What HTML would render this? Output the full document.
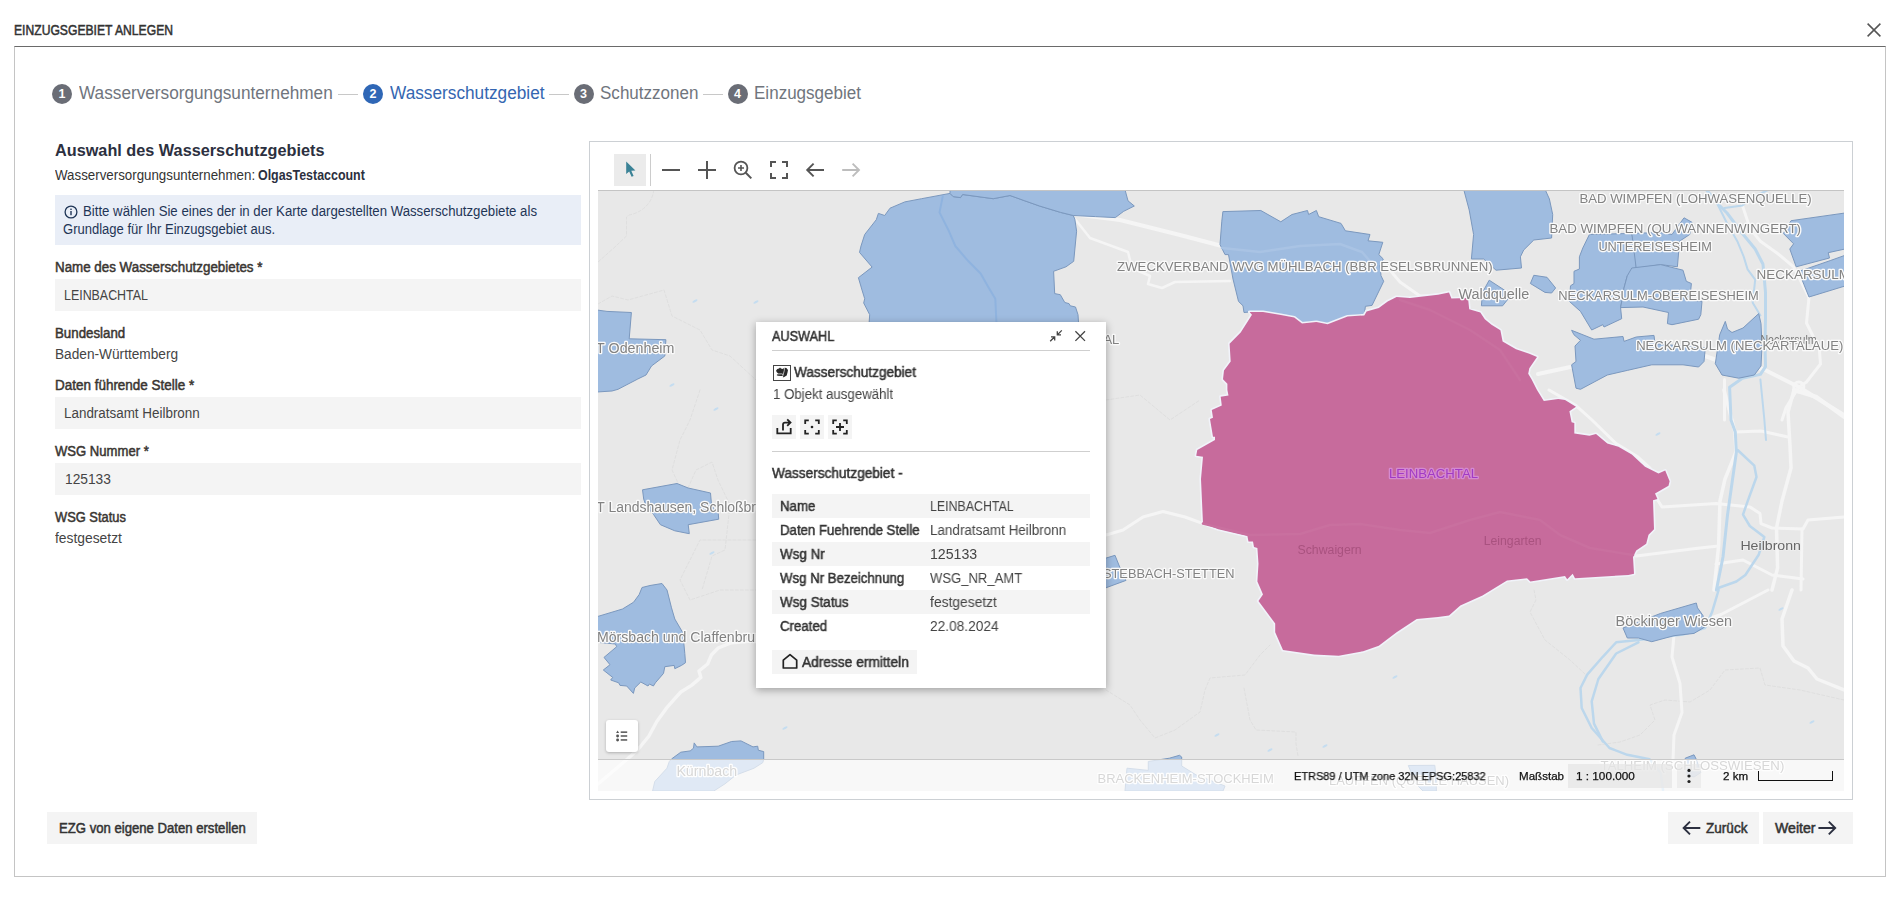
<!DOCTYPE html>
<html lang="de"><head><meta charset="utf-8"><title>Einzugsgebiet anlegen</title>
<style>
html,body{margin:0;padding:0;background:#fff;}
body{width:1899px;height:898px;position:relative;overflow:hidden;font-family:"Liberation Sans",sans-serif;color:#333;}
.t{position:absolute;white-space:nowrap;line-height:1;transform-origin:0 50%;display:block;}
.b{position:absolute;box-sizing:border-box;}
svg{position:absolute;overflow:visible;}
</style></head><body>
<div class="b" style="left:14px;top:46px;width:1872px;height:831px;border:1px solid #c4c4c4;border-top:1px solid #6a6a6a;"></div>
<span class="t" style="left:13.90px;top:23.05px;font-size:14.00px;color:#333;transform:scaleX(0.8673);-webkit-text-stroke:0.5px #333;">EINZUGSGEBIET ANLEGEN</span>
<svg style="left:1867px;top:23px" width="14" height="14" viewBox="0 0 14 14"><path d="M0.6 0.6 L13.4 13.4 M13.4 0.6 L0.6 13.4" stroke="#555" stroke-width="1.5" fill="none"/></svg>
<div class="b" style="left:52px;top:84px;width:20px;height:20px;border-radius:50%;background:#6a6d76;"></div>
<span class="t" style="left:52px;top:88.2px;width:20px;text-align:center;font-size:12.5px;font-weight:bold;color:#fff;">1</span>
<span class="t" style="left:78.80px;top:85.19px;font-size:17.50px;color:#70757d;transform:scaleX(0.9832);">Wasserversorgungsunternehmen</span>
<div class="b" style="left:363px;top:84px;width:20px;height:20px;border-radius:50%;background:#2f67b6;"></div>
<span class="t" style="left:363px;top:88.2px;width:20px;text-align:center;font-size:12.5px;font-weight:bold;color:#fff;">2</span>
<span class="t" style="left:389.50px;top:85.19px;font-size:17.50px;color:#3466b1;transform:scaleX(0.9848);">Wasserschutzgebiet</span>
<div class="b" style="left:573.5px;top:84px;width:20px;height:20px;border-radius:50%;background:#6a6d76;"></div>
<span class="t" style="left:573.5px;top:88.2px;width:20px;text-align:center;font-size:12.5px;font-weight:bold;color:#fff;">3</span>
<span class="t" style="left:599.50px;top:85.19px;font-size:17.50px;color:#70757d;transform:scaleX(0.9738);">Schutzzonen</span>
<div class="b" style="left:727.5px;top:84px;width:20px;height:20px;border-radius:50%;background:#6a6d76;"></div>
<span class="t" style="left:727.5px;top:88.2px;width:20px;text-align:center;font-size:12.5px;font-weight:bold;color:#fff;">4</span>
<span class="t" style="left:754.00px;top:85.19px;font-size:17.50px;color:#70757d;transform:scaleX(0.9736);">Einzugsgebiet</span>
<div class="b" style="left:338px;top:93.5px;width:19.5px;height:1px;background:#c8c8c8;"></div>
<div class="b" style="left:549px;top:93.5px;width:20px;height:1px;background:#c8c8c8;"></div>
<div class="b" style="left:702.5px;top:93.5px;width:20px;height:1px;background:#c8c8c8;"></div>
<span class="t" style="left:55.10px;top:142.86px;font-size:16.70px;font-weight:bold;color:#2c3040;transform:scaleX(0.9740);">Auswahl des Wasserschutzgebiets</span>
<span class="t" style="left:54.90px;top:167.95px;font-size:14.00px;color:#333;transform:scaleX(0.9513);">Wasserversorgungsunternehmen:</span>
<span class="t" style="left:258.00px;top:167.95px;font-size:14.00px;font-weight:bold;color:#2c3040;transform:scaleX(0.8876);">OlgasTestaccount</span>
<div class="b" style="left:55px;top:195px;width:526px;height:50px;background:#e9eef7;"></div>
<svg style="left:64px;top:204.5px" width="14" height="14" viewBox="0 0 14 14"><circle cx="7" cy="7" r="5.9" fill="none" stroke="#1f3556" stroke-width="1.3"/><rect x="6.3" y="6" width="1.4" height="4.2" fill="#1f3556"/><rect x="6.3" y="3.6" width="1.4" height="1.4" fill="#1f3556"/></svg>
<span class="t" style="left:83.00px;top:203.95px;font-size:14.00px;color:#1f3556;transform:scaleX(0.9435);">Bitte wählen Sie eines der in der Karte dargestellten Wasserschutzgebiete als</span>
<span class="t" style="left:62.90px;top:222.15px;font-size:14.00px;color:#1f3556;transform:scaleX(0.9300);">Grundlage für Ihr Einzugsgebiet aus.</span>
<span class="t" style="left:55.00px;top:260.15px;font-size:14.00px;color:#3a3632;transform:scaleX(0.9542);-webkit-text-stroke:0.5px #3a3632;">Name des Wasserschutzgebietes *</span>
<div class="b" style="left:55px;top:279px;width:526px;height:32px;background:#f4f4f4;"></div>
<span class="t" style="left:63.70px;top:288.15px;font-size:14.00px;color:#444;transform:scaleX(0.8865);">LEINBACHTAL</span>
<span class="t" style="left:55.40px;top:326.15px;font-size:14.00px;color:#3a3632;transform:scaleX(0.9497);-webkit-text-stroke:0.5px #3a3632;">Bundesland</span>
<span class="t" style="left:55.40px;top:347.15px;font-size:14.00px;color:#444;transform:scaleX(0.9764);">Baden-Württemberg</span>
<span class="t" style="left:55.20px;top:378.15px;font-size:14.00px;color:#3a3632;transform:scaleX(0.9616);-webkit-text-stroke:0.5px #3a3632;">Daten führende Stelle *</span>
<div class="b" style="left:55px;top:397px;width:526px;height:32px;background:#f4f4f4;"></div>
<span class="t" style="left:64.00px;top:406.15px;font-size:14.00px;color:#444;transform:scaleX(0.9583);">Landratsamt Heilbronn</span>
<span class="t" style="left:55.20px;top:444.15px;font-size:14.00px;color:#3a3632;transform:scaleX(0.9341);-webkit-text-stroke:0.5px #3a3632;">WSG Nummer *</span>
<div class="b" style="left:55px;top:463px;width:526px;height:32px;background:#f4f4f4;"></div>
<span class="t" style="left:64.90px;top:472.15px;font-size:14.00px;color:#444;transform:scaleX(0.9831);">125133</span>
<span class="t" style="left:55.20px;top:510.15px;font-size:14.00px;color:#3a3632;transform:scaleX(0.9195);-webkit-text-stroke:0.5px #3a3632;">WSG Status</span>
<span class="t" style="left:55.20px;top:531.15px;font-size:14.00px;color:#444;transform:scaleX(0.9883);">festgesetzt</span>
<div class="b" style="left:47px;top:812px;width:210px;height:32px;background:#f4f4f4;"></div>
<span class="t" style="left:58.80px;top:821.05px;font-size:14.00px;color:#333;transform:scaleX(0.9377);-webkit-text-stroke:0.5px #333;">EZG von eigene Daten erstellen</span>
<div class="b" style="left:1668px;top:812px;width:90.5px;height:32px;background:#f4f4f4;"></div>
<div class="b" style="left:1763px;top:812px;width:89.5px;height:32px;background:#f4f4f4;"></div>
<svg style="left:1682px;top:820px" width="20" height="16" viewBox="0 0 20 16"><path d="M18.3 8 H1.6 M8 1.6 L1.6 8 L8 14.4" stroke="#2c3040" stroke-width="1.9" fill="none"/></svg>
<span class="t" style="left:1705.80px;top:821.35px;font-size:14.00px;color:#333;transform:scaleX(0.9687);-webkit-text-stroke:0.5px #333;">Zurück</span>
<span class="t" style="left:1774.70px;top:821.35px;font-size:14.00px;color:#333;transform:scaleX(1.0080);-webkit-text-stroke:0.5px #333;">Weiter</span>
<svg style="left:1816.7px;top:820px" width="20" height="16" viewBox="0 0 20 16"><path d="M1.4 8 H18.2 M11.8 1.6 L18.2 8 L11.8 14.4" stroke="#2c3040" stroke-width="1.9" fill="none"/></svg>
<div class="b" style="left:589px;top:141px;width:1264px;height:659px;border:1px solid #ccd0d4;background:#fff;"></div>
<div class="b" style="left:614px;top:154px;width:32px;height:32px;background:#ebebeb;"></div>
<div class="b" style="left:650px;top:154px;width:1px;height:32px;background:#ccc;"></div>
<svg style="left:589px;top:141px" width="300" height="50" viewBox="589 141 300 50"><path d="M626.2 161.4 L626.2 174 L629.2 171.4 L631.6 176.8 L633.6 175.9 L631.3 170.7 L635.4 170.5 Z" fill="#3a8296"/><path d="M662 170 H680 M698 170 H716 M707 161 V179" stroke="#555" stroke-width="2" fill="none"/><circle cx="741" cy="168" r="6.4" stroke="#555" stroke-width="1.8" fill="none"/><path d="M745.8 172.8 L751.3 178.4" stroke="#555" stroke-width="2" fill="none"/><path d="M738 168 H744 M741 165 V171" stroke="#555" stroke-width="1.6" fill="none"/><path d="M771 167 V162 H776 M782 162 H787 V167 M787 173 V178 H782 M776 178 H771 V173" stroke="#555" stroke-width="2" fill="none"/><path d="M824 170 H807.4 M813.6 163.6 L807.2 170 L813.6 176.4" stroke="#555" stroke-width="1.9" fill="none"/><path d="M842.2 170 H858.8 M852.6 163.6 L859 170 L852.6 176.4" stroke="#bdbdbd" stroke-width="1.9" fill="none"/></svg>
<svg style="left:598px;top:190px;overflow:hidden;will-change:transform" width="1246" height="601" viewBox="598 190 1246 601"><rect x="598" y="190" width="1246" height="601" fill="#e8e8e8"/><path d="M653.7,190 C653,200 645,212 629,215 L626.5,217 L626.5,236 L616,246 L598,262" fill="none" stroke="#dcdcdc" stroke-width="0.8" stroke-linecap="round" stroke-linejoin="round" stroke-dasharray="3 2"/><path d="M598,304 L612,296 L628,300 L664,290 L672,316 L700,330 L712,350 L730,356 L756,380" fill="none" stroke="#dcdcdc" stroke-width="0.8" stroke-linecap="round" stroke-linejoin="round" stroke-dasharray="3 2"/><path d="M756,540 L700,540 L690,560 L680,580 L690,600 L720,590 L756,590" fill="none" stroke="#dcdcdc" stroke-width="0.8" stroke-linecap="round" stroke-linejoin="round" stroke-dasharray="3 2"/><path d="M700,390 L690,420 L680,440 L672,470 L678,483" fill="none" stroke="#dcdcdc" stroke-width="0.8" stroke-linecap="round" stroke-linejoin="round" stroke-dasharray="3 2"/><path d="M688,488 L696,470 L712,462 L718,480 L730,505 L725,550 L712,556 L702,590" fill="none" stroke="#dcdcdc" stroke-width="0.8" stroke-linecap="round" stroke-linejoin="round" stroke-dasharray="3 2"/><path d="M1244,688 L1250,720 L1256,730 L1296,732 L1296,744 L1298,756" fill="none" stroke="#dcdcdc" stroke-width="0.8" stroke-linecap="round" stroke-linejoin="round" stroke-dasharray="3 2"/><path d="M1106,400 L1140,395 L1170,420 L1200,400" fill="none" stroke="#dcdcdc" stroke-width="0.8" stroke-linecap="round" stroke-linejoin="round" stroke-dasharray="3 2"/><path d="M1106,690 L1130,705 L1140,720 L1155,738 L1175,730 L1200,712 L1205,690 L1210,678 L1245,675 L1260,655 L1270,645" fill="none" stroke="#dcdcdc" stroke-width="0.8" stroke-linecap="round" stroke-linejoin="round" stroke-dasharray="3 2"/><path d="M1534,590 L1536,600 L1530,612 L1545,640 L1570,660 L1585,674" fill="none" stroke="#dcdcdc" stroke-width="0.8" stroke-linecap="round" stroke-linejoin="round" stroke-dasharray="3 2"/><path d="M1598,745 L1620,742 L1640,735 L1655,720 L1650,705 L1665,700 L1690,702 L1710,690 L1725,670 L1760,668 L1765,685 L1800,690 L1844,700" fill="none" stroke="#dcdcdc" stroke-width="0.8" stroke-linecap="round" stroke-linejoin="round" stroke-dasharray="3 2"/><path d="M598,784 L627.4,759 L638,749.5 L648.8,736.2 L656.8,721.5 L667.5,706.8 L680.8,692 L691.5,685.4 L700.9,677.4 L699,671 L707.6,664 L711.6,654.7 L718.2,648 L731.6,642.7 L756,640.5" fill="none" stroke="#f5f5f5" stroke-width="3.4" stroke-linecap="round" stroke-linejoin="round" /><path d="M1106,535 L1123,530 L1143,517 L1163,511.5 L1185,517 L1203,523.6" fill="none" stroke="#f5f5f5" stroke-width="3" stroke-linecap="round" stroke-linejoin="round" /><path d="M1064,213 L1120,220 L1180,235 L1222,246" fill="none" stroke="#f5f5f5" stroke-width="4" stroke-linecap="round" stroke-linejoin="round" /><path d="M1075,219 L1090,238 L1128,252 L1132,268 L1150,276 L1148,284 L1162,288 L1175,282 L1230,281" fill="none" stroke="#f5f5f5" stroke-width="2.5" stroke-linecap="round" stroke-linejoin="round" /><path d="M1383,262 L1400,282 L1420,296 L1438,296" fill="none" stroke="#f5f5f5" stroke-width="3" stroke-linecap="round" stroke-linejoin="round" /><path d="M1538,374 L1575,366" fill="none" stroke="#f5f5f5" stroke-width="4" stroke-linecap="round" stroke-linejoin="round" /><path d="M1742.4,205.4 L1750,228.4 L1760.4,241.2 L1778.3,254 L1793.6,266.8 L1809,297.5 L1806.5,323 L1819.3,348.8 L1820.5,364 L1806.5,382 L1798.8,387" fill="none" stroke="#f5f5f5" stroke-width="3" stroke-linecap="round" stroke-linejoin="round" /><path d="M1705,356 L1722,362 L1763,369 L1798.8,387 L1844,415" fill="none" stroke="#f5f5f5" stroke-width="4" stroke-linecap="round" stroke-linejoin="round" /><path d="M1798.8,387 L1786,407.7 L1782,420" fill="none" stroke="#f5f5f5" stroke-width="3" stroke-linecap="round" stroke-linejoin="round" /><path d="M1724.5,379.5 L1724.5,420" fill="none" stroke="#f5f5f5" stroke-width="3" stroke-linecap="round" stroke-linejoin="round" /><path d="M1798.8,387 m-5,0 a5,5 0 1,0 10,0 a5,5 0 1,0 -10,0" fill="none" stroke="#f5f5f5" stroke-width="3" stroke-linecap="round" stroke-linejoin="round" /><path d="M1549,390 L1576,405.6 L1592,420 L1616,443.5 L1638,457 L1650,468" fill="none" stroke="#f5f5f5" stroke-width="3" stroke-linecap="round" stroke-linejoin="round" /><path d="M1724,390 L1735,432 L1736,452 L1725,479 L1720,501 L1718.6,546 L1714,590" fill="none" stroke="#f5f5f5" stroke-width="3.5" stroke-linecap="round" stroke-linejoin="round" /><path d="M1657,499 L1662,507 L1716,503.6 L1750,507 L1760,513.6 L1761,523.6 L1772,528 L1803,529 L1808,520 L1844,517" fill="none" stroke="#f5f5f5" stroke-width="3" stroke-linecap="round" stroke-linejoin="round" /><path d="M1636,556 L1700,548 L1718.6,546" fill="none" stroke="#f5f5f5" stroke-width="3" stroke-linecap="round" stroke-linejoin="round" /><path d="M1794,390 L1788,412 L1790,446 L1791,468 L1782,501 L1776.5,528 L1777.6,568 L1772,590" fill="none" stroke="#f5f5f5" stroke-width="3.5" stroke-linecap="round" stroke-linejoin="round" /><path d="M1735,432 L1761,431 L1788,437" fill="none" stroke="#f5f5f5" stroke-width="3" stroke-linecap="round" stroke-linejoin="round" /><path d="M1794,390 L1816.6,397 L1844,417" fill="none" stroke="#f5f5f5" stroke-width="4" stroke-linecap="round" stroke-linejoin="round" /><path d="M1716,564 L1743,560 L1772,575 L1803,579" fill="none" stroke="#f5f5f5" stroke-width="3" stroke-linecap="round" stroke-linejoin="round" /><path d="M1802,529 L1801,590" fill="none" stroke="#f5f5f5" stroke-width="3" stroke-linecap="round" stroke-linejoin="round" /><path d="M1674,634.5 L1672,657 L1680,683.5 L1682,712.5 L1674,735 L1673,760" fill="none" stroke="#f5f5f5" stroke-width="3" stroke-linecap="round" stroke-linejoin="round" /><path d="M1792,590 L1782,619 L1783,646 L1794,661 L1808,668 L1817,679 L1844,690" fill="none" stroke="#f5f5f5" stroke-width="3.5" stroke-linecap="round" stroke-linejoin="round" /><path d="M1768,590 L1721,614.5 L1705,620" fill="none" stroke="#f5f5f5" stroke-width="3" stroke-linecap="round" stroke-linejoin="round" /><path d="M1706.6,190 L1716.8,202.8 L1727,213 L1742.4,233.5 L1755.2,249 L1763,264.3 L1765.5,292.4 L1765.5,318 L1765,343.6 L1765.5,366.7 L1760.4,374.4 L1742.4,378.2 L1729.6,387.2 L1731,420 L1735.3,432 L1736.4,452 L1727.5,515 L1723,557 L1716.4,590" fill="none" stroke="#bcd7ec" stroke-width="3" stroke-linecap="round" stroke-linejoin="round" /><path d="M1714.3,197.7 L1727,223.3 L1737.3,241.2 L1743.7,256.6 L1747.6,269.4 L1755.2,279.6 L1752.7,302.7 L1760.4,315.5" fill="none" stroke="#bcd7ec" stroke-width="2" stroke-linecap="round" stroke-linejoin="round" /><path d="M1724.5,208 L1742.4,205.4 L1755,196 L1768,190" fill="none" stroke="#bcd7ec" stroke-width="2" stroke-linecap="round" stroke-linejoin="round" /><path d="M1760.4,379.5 L1764.2,418 L1766,440" fill="none" stroke="#bcd7ec" stroke-width="2" stroke-linecap="round" stroke-linejoin="round" /><path d="M1737.6,450 L1754.3,465.7 L1756.5,477 L1747.6,501.4 L1743,514.7 L1749.8,526 L1764.3,537 L1758.7,554.8 L1745.4,575 L1736.4,581.5 L1717.5,588.2" fill="none" stroke="#bcd7ec" stroke-width="2.5" stroke-linecap="round" stroke-linejoin="round" /><path d="M1718.6,590 L1712,612.3 L1705,628 L1683,634.5 L1638.4,640 L1616.2,642.3 L1602.8,656.8 L1587.2,674.6 L1580.5,688 L1581.7,708 L1591.7,728 L1609.5,748 L1627.3,754.8 L1649.6,759.3 L1660.7,772.6 L1663,790" fill="none" stroke="#bcd7ec" stroke-width="2.5" stroke-linecap="round" stroke-linejoin="round" /><path d="M1638.4,642.3 L1616.2,653.5 L1598.4,679 L1591.7,701.4 L1594,723.6 L1602.8,741.4" fill="none" stroke="#bcd7ec" stroke-width="2.5" stroke-linecap="round" stroke-linejoin="round" /><ellipse cx="756" cy="302" rx="2.8" ry="1.2" fill="#c5ddf0" transform="rotate(-25 756 302)"/><ellipse cx="695" cy="301" rx="2.8" ry="1.2" fill="#c5ddf0" transform="rotate(-25 695 301)"/><ellipse cx="672" cy="385" rx="2.8" ry="1.2" fill="#c5ddf0" transform="rotate(-25 672 385)"/><ellipse cx="716" cy="409" rx="2.8" ry="1.2" fill="#c5ddf0" transform="rotate(-25 716 409)"/><ellipse cx="712" cy="553" rx="2.8" ry="1.2" fill="#c5ddf0" transform="rotate(-25 712 553)"/><ellipse cx="1000" cy="320" rx="2.8" ry="1.2" fill="#c5ddf0" transform="rotate(-25 1000 320)"/><ellipse cx="785" cy="728" rx="2.8" ry="1.2" fill="#c5ddf0" transform="rotate(-25 785 728)"/><ellipse cx="1217" cy="735" rx="2.8" ry="1.2" fill="#c5ddf0" transform="rotate(-25 1217 735)"/><ellipse cx="1325" cy="746" rx="2.8" ry="1.2" fill="#c5ddf0" transform="rotate(-25 1325 746)"/><ellipse cx="1270" cy="750" rx="2.8" ry="1.2" fill="#c5ddf0" transform="rotate(-25 1270 750)"/><ellipse cx="1395" cy="677" rx="2.8" ry="1.2" fill="#c5ddf0" transform="rotate(-25 1395 677)"/><ellipse cx="1456" cy="604" rx="2.8" ry="1.2" fill="#c5ddf0" transform="rotate(-25 1456 604)"/><ellipse cx="1812" cy="722" rx="2.8" ry="1.2" fill="#c5ddf0" transform="rotate(-25 1812 722)"/><ellipse cx="1781" cy="609" rx="2.8" ry="1.2" fill="#c5ddf0" transform="rotate(-25 1781 609)"/><ellipse cx="1658" cy="434" rx="2.8" ry="1.2" fill="#c5ddf0" transform="rotate(-25 1658 434)"/><polygon points="950,193.4 921.6,198.7 904.8,201.9 890,208.2 884.7,215.5 878.4,213.4 876.3,219.7 864.7,234.5 861,246 859.5,252.4 872.1,267.1 858.4,277.7 862,290 864.7,298.7 863.7,303 869.7,314.7 868.6,330 1079,330 1078,314.7 1075.5,307 1070.3,305.8 1069,303.6 1064.8,302.5 1060.3,294.7 1054.7,293.6 1053.6,271.3 1066,266.8 1073.7,261.3 1076.6,231.2 1074.8,219 1073.2,215.5 1060.6,212.4 1039.5,206 1024.8,200.8 1010,195.5 993.2,198.7 962.6,194.5 960.5,197.6 953.2,196.6" fill="#9fbce0" stroke="#7b98be" stroke-width="1" stroke-linejoin="round" /><polygon points="950,189 950,193.4 953.2,196.6 960.5,197.6 962.6,194.5 993.2,198.7 1010,195.5 1024.8,200.8 1039.5,206 1060.6,212.4 1073.2,215.5 1095.3,216.6 1115.3,217.6 1123.7,211.3 1134.3,206 1128,200.8 1124.8,189" fill="#9fbce0" stroke="#7b98be" stroke-width="1" stroke-linejoin="round" /><polygon points="597,310 607,311.4 631.4,312.5 629.2,338.8 665.9,339.7 664.8,356 651.5,366 646,375 637.8,379 618,389.3 612,391 597,392" fill="#9fbce0" stroke="#7b98be" stroke-width="1" stroke-linejoin="round" /><polygon points="1222.9,211.6 1260.8,210.5 1280.8,221.8 1292,214.5 1307.5,210.5 1308.6,214.5 1316.4,210.5 1318.7,216.7 1341,223.4 1345.4,230.8 1370,234.5 1368,240.8 1382.8,242.3 1378.8,254.6 1383.3,259 1380,265.7 1381,275.7 1383.7,281.3 1372,305.4 1365.4,306.3 1364.3,314.7 1347.6,315.8 1327.6,323.6 1316.4,321.4 1302,323 1294.2,317 1280.8,314.7 1263,312 1249.6,312 1244,312.5 1243,305.8 1238.5,301.4 1233,279 1228.5,254.6 1225,254.6 1220,244.6 1221.8,221.2" fill="#9fbce0" stroke="#7b98be" stroke-width="1" stroke-linejoin="round" /><polygon points="1463.6,189 1544.9,189 1549.4,199 1552.7,214.5 1551.6,238 1533.8,240 1523.7,250 1520.4,256.8 1521.5,268 1496,270.2 1483.7,259 1471.4,259 1473.6,234.5 1469.2,210" fill="#9fbce0" stroke="#7b98be" stroke-width="1" stroke-linejoin="round" /><polygon points="1489.2,280.2 1511.5,294.7 1502.6,305.8 1481.4,305.8 1482.5,292.4" fill="#9fbce0" stroke="#7b98be" stroke-width="1" stroke-linejoin="round" /><polygon points="1533.8,275.3 1547,277.3 1555.6,288 1551.6,293 1545,292.4 1530.4,283.5" fill="#9fbce0" stroke="#7b98be" stroke-width="1" stroke-linejoin="round" /><polygon points="1589.4,234.5 1631.8,233.4 1636.2,254.6 1636.2,268 1627.3,275.7 1624,288 1620.6,308 1621.7,318.7 1604,327 1602.8,324.7 1591.7,330 1580.5,311.4 1569.4,301.4 1570.5,285.8 1574,283.5 1574,271.3 1579.4,269 1579.4,256.8 1582.8,248" fill="#9fbce0" stroke="#7b98be" stroke-width="1" stroke-linejoin="round" /><polygon points="1631.8,233.4 1660,232.5 1672,234.5 1684,217.8 1692,222.3 1689.7,234.5 1679.6,241.2 1677.4,266.8 1660.7,264.6 1636.2,268.4" fill="#9fbce0" stroke="#7b98be" stroke-width="1" stroke-linejoin="round" /><polygon points="1631.8,268 1660.7,264.6 1683,270.2 1686.3,281.3 1691.4,283.5 1689.7,300.2 1702,301.4 1700.8,314.7 1698.6,319.2 1672,324.7 1667.4,323.6 1668.5,312.5 1643,307 1620.6,307.6 1624,288 1627.3,275.7" fill="#9fbce0" stroke="#7b98be" stroke-width="1" stroke-linejoin="round" /><polygon points="1571.6,330.3 1594,339.2 1623,336.5 1624,341.4 1636.2,337 1654,335.4 1655,343.7 1705.3,348 1704,361.5 1698.6,367 1683,364.8 1651.8,364.8 1627.3,370.4 1607.3,375 1580.5,389.3 1576,388.2 1571.6,364.8 1576,361.5 1575,346 1580.5,340.3 1574,334.8" fill="#9fbce0" stroke="#7b98be" stroke-width="1" stroke-linejoin="round" /><polygon points="1725.3,321.4 1727.5,329.2 1732,332.5 1743,328 1758.7,313.6 1761,323.6 1762,346 1761,366 1754.3,375 1738.7,378.2 1722,375 1715.3,363.7 1719.7,334.8" fill="#9fbce0" stroke="#7b98be" stroke-width="1" stroke-linejoin="round" /><polygon points="1791,220.7 1845,213 1845,249 1828.2,252.7 1829.5,258 1796.2,266.8 1789.8,249 1793.6,243.8 1783.4,233.5" fill="#9fbce0" stroke="#7b98be" stroke-width="1" stroke-linejoin="round" /><polygon points="1830.8,260.4 1845,255.3 1845,286 1809,297 1804,284.7 1798.8,271.5" fill="#9fbce0" stroke="#7b98be" stroke-width="1" stroke-linejoin="round" /><polygon points="642.5,489.8 677,483.5 688.2,488 710.5,493 711.6,505.8 718.3,513.6 718.7,519.2 688.2,524.7 689.3,533.7 674.8,530.8 660.4,524.7 653.7,514.7 646,505.8 643.7,499" fill="#9fbce0" stroke="#7b98be" stroke-width="1" stroke-linejoin="round" /><polygon points="642,587.5 650,585.5 662,583.5 667,590 671.5,607.8 674.8,619 682.6,632.3 683.5,640 684.8,653.4 685.5,662.7 681.5,665.4 674.8,668.7 674.2,665.4 664.8,666.7 663.5,673.4 655.4,682.8 653.4,686 649.4,684 648,686 640.8,682 634.7,688 633.4,693.4 626.7,686 620,685.4 618.7,682.8 610.7,680 612.7,677.4 603.3,670 610,664.7 604,657.4 616.7,646.7 615.4,644 597,642.3 597,616.7 622.5,609 633.6,602.2 639.2,594.5" fill="#9fbce0" stroke="#7b98be" stroke-width="1" stroke-linejoin="round" /><polygon points="671.5,759 680.8,752.2 690.2,750.9 693.5,748.2 694.2,742.9 696.9,746.9 718.2,746.2 731.6,741.5 741,740.9 753,746.9 757.7,746.2 758.3,750.2 763.7,751.6 763.7,759 762.8,762.6 754,768.2 736,775 725,783.8 713.8,791 652.6,791 654.8,781.5 667,768.2 669.3,761.5" fill="#9fbce0" stroke="#7b98be" stroke-width="1" stroke-linejoin="round" /><polygon points="1100,560 1115,555.3 1119.3,566 1126,580.4 1100,590" fill="#9fbce0" stroke="#7b98be" stroke-width="1" stroke-linejoin="round" /><polygon points="1148.3,761.5 1169.4,758.2 1179.5,755.3 1181.7,757 1181.7,766 1196.2,775 1225,786 1223,791 1125,791 1127,768.2 1148.3,770.4" fill="#9fbce0" stroke="#7b98be" stroke-width="1" stroke-linejoin="round" /><polygon points="1623,628 1660.7,613.4 1696.3,603 1697.5,607.8 1703,615.6 1705.3,626.7 1694,633.4 1674,635.7 1651.8,641.7 1638.4,638 1627.3,638" fill="#9fbce0" stroke="#7b98be" stroke-width="1" stroke-linejoin="round" /><polygon points="1685.2,758.2 1694,754.8 1696.3,759.3 1700.8,772.6 1694,777 1687.4,775" fill="#9fbce0" stroke="#7b98be" stroke-width="1" stroke-linejoin="round" /><polygon points="1408.3,765.5 1434.8,765.3 1436,778 1436.4,791 1423,791 1414,782 1411,772" fill="#9fbce0" stroke="#7b98be" stroke-width="1" stroke-linejoin="round" /><path d="M942.7,196.6 L939.5,212.4 L949,231.3 L955.3,246 L968,260.8 L980.6,273.5 L989,288.2 L995.3,298.7 L996.4,322" fill="none" stroke="#8fb3df" stroke-width="2" stroke-linecap="round" stroke-linejoin="round" /><path d="M1222,248 L1260,252 L1300,246 L1340,244 L1362,252 L1376,268" fill="none" stroke="#a9c3e4" stroke-width="2.5" stroke-linecap="round" stroke-linejoin="round" /><polygon points="1249.6,312 1263,312 1280.8,315 1294.2,317.5 1302,323.6 1316.4,322 1327.6,324.3 1347.6,316.5 1364.3,315.4 1366.6,311.4 1378.8,308 1387.7,301.4 1396.6,297 1410,298 1438,294.7 1449,292.4 1451.4,298.5 1468,298 1469.2,309.2 1480.3,312.5 1484.8,319.2 1491.5,324.7 1500.4,330.3 1502.6,341.4 1516,349.2 1529.3,353.7 1537,357 1529.3,368.2 1528.2,373.7 1531.5,379.3 1537,390 1543.8,401 1558.3,399 1565,400 1576,406.7 1569.4,411.2 1571.6,422.3 1574.3,423 1574.3,433.4 1589.4,435.7 1596,434 1607.3,443.5 1618.4,446.8 1631.8,454.6 1645,466.8 1658.5,473.5 1665.2,470.6 1669.6,481.3 1668.5,485.8 1655,493.6 1657.4,499 1653,500.2 1654,529.2 1648.5,534.8 1646.2,543.7 1636.2,550.4 1633,557 1634,573.7 1628.4,575 1575,578.2 1572.7,573.7 1567.2,579.3 1565,576 1530.4,581.5 1527,578.2 1507,580.4 1491.5,590 1482.5,595.6 1460.3,605.6 1449,615.6 1438,617 1416.7,619 1396.6,632.3 1378.8,645.7 1363.2,651.2 1338.7,655.7 1314.2,654.6 1283,650 1275.2,632.3 1275.2,623.4 1258.5,601 1263,594.5 1261,589.8 1257.4,581.5 1258.5,563.7 1257.4,548 1254,547 1253,541.4 1248.5,541.4 1247.4,536 1218.4,529.2 1203,523.6 1201,479 1203,456.8 1196.2,455.7 1197.3,450 1215,440 1215,436.8 1213,436.8 1210,419 1213,417.8 1211.8,410 1221.8,405.6 1220.7,396.7 1228.5,395.6 1227.4,390 1227.4,383.8 1223,379.3 1224,370.4 1230.7,361.5 1229.6,343.7 1240.7,332.5 1252,314.7" fill="#c76b9c" stroke="#f1f3fa" stroke-width="3.2" stroke-linejoin="round" paint-order="stroke"/><path d="M1203,523.6 L1250,535 L1300,534 L1330,525 L1360,524 L1400,530 L1430,533 L1470,520 L1500,512 L1540,520 L1560,535 L1590,548 L1633,555" fill="none" stroke="#c9709f" stroke-width="2.5" stroke-linecap="round" stroke-linejoin="round" /><path d="M1400,300 L1430,310 L1470,330 L1500,350 L1520,380" fill="none" stroke="#c9709f" stroke-width="2.5" stroke-linecap="round" stroke-linejoin="round" /><text x="1579.4" y="202.7" font-size="13" font-family="Liberation Sans, sans-serif" textLength="232.3" lengthAdjust="spacingAndGlyphs" fill="#828282" stroke="#fafafa" stroke-width="2.6" paint-order="stroke" stroke-linejoin="round" opacity="1">BAD WIMPFEN (LOHWASENQUELLE)</text><text x="1549.4" y="232.8" font-size="13" font-family="Liberation Sans, sans-serif" textLength="251.6" lengthAdjust="spacingAndGlyphs" fill="#828282" stroke="#fafafa" stroke-width="2.6" paint-order="stroke" stroke-linejoin="round" opacity="1">BAD WIMPFEN (QU WANNENWINGERT)</text><text x="1598.4" y="250.8" font-size="13" font-family="Liberation Sans, sans-serif" textLength="113.5" lengthAdjust="spacingAndGlyphs" fill="#828282" stroke="#fafafa" stroke-width="2.6" paint-order="stroke" stroke-linejoin="round" opacity="1">UNTEREISESHEIM</text><text x="1756.5" y="279.1" font-size="13" font-family="Liberation Sans, sans-serif" textLength="93.5" lengthAdjust="spacingAndGlyphs" fill="#828282" stroke="#fafafa" stroke-width="2.6" paint-order="stroke" stroke-linejoin="round" opacity="1">NECKARSULM</text><text x="1558.3" y="299.8" font-size="13" font-family="Liberation Sans, sans-serif" textLength="200.4" lengthAdjust="spacingAndGlyphs" fill="#828282" stroke="#fafafa" stroke-width="2.6" paint-order="stroke" stroke-linejoin="round" opacity="1">NECKARSULM-OBEREISESHEIM</text><text x="1458.5" y="298.5" font-size="14" font-family="Liberation Sans, sans-serif" textLength="70.8" lengthAdjust="spacingAndGlyphs" fill="#828282" stroke="#fafafa" stroke-width="2.6" paint-order="stroke" stroke-linejoin="round" opacity="1">Waldquelle</text><text x="1117.1" y="270.6" font-size="13" font-family="Liberation Sans, sans-serif" textLength="375.5" lengthAdjust="spacingAndGlyphs" fill="#828282" stroke="#fafafa" stroke-width="2.6" paint-order="stroke" stroke-linejoin="round" opacity="1">ZWECKVERBAND WVG MÜHLBACH (BBR ESELSBRUNNEN)</text><text x="1760.4" y="343.8" font-size="12.5" font-family="Liberation Sans, sans-serif" textLength="56.3" lengthAdjust="spacingAndGlyphs" fill="#777">Neckarsulm</text><text x="1636.2" y="349.9" font-size="13" font-family="Liberation Sans, sans-serif" textLength="207.1" lengthAdjust="spacingAndGlyphs" fill="#828282" stroke="#fafafa" stroke-width="2.6" paint-order="stroke" stroke-linejoin="round" opacity="1">NECKARSULM (NECKARTALAUE)</text><text x="585.0" y="353.0" font-size="14" font-family="Liberation Sans, sans-serif" textLength="89.4" lengthAdjust="spacingAndGlyphs" fill="#828282" stroke="#fafafa" stroke-width="2.6" paint-order="stroke" stroke-linejoin="round" opacity="1">OT Odenheim</text><text x="1047.3" y="343.7" font-size="13" font-family="Liberation Sans, sans-serif" textLength="72.0" lengthAdjust="spacingAndGlyphs" fill="#828282" stroke="#fafafa" stroke-width="2.6" paint-order="stroke" stroke-linejoin="round" opacity="1">KRAICHTAL</text><text x="585.5" y="512.0" font-size="14" font-family="Liberation Sans, sans-serif" textLength="209.3" lengthAdjust="spacingAndGlyphs" fill="#828282" stroke="#fafafa" stroke-width="2.6" paint-order="stroke" stroke-linejoin="round" opacity="1">OT Landshausen, Schloßbrunnen</text><text x="597.0" y="642.3" font-size="14" font-family="Liberation Sans, sans-serif" textLength="189.4" lengthAdjust="spacingAndGlyphs" fill="#828282" stroke="#fafafa" stroke-width="2.6" paint-order="stroke" stroke-linejoin="round" opacity="1">Mörsbach und Claffenbrunnen</text><text x="1103.0" y="578.2" font-size="13" font-family="Liberation Sans, sans-serif" textLength="131.5" lengthAdjust="spacingAndGlyphs" fill="#828282" stroke="#fafafa" stroke-width="2.6" paint-order="stroke" stroke-linejoin="round" opacity="1">STEBBACH-STETTEN</text><text x="1615.5" y="626.1" font-size="14" font-family="Liberation Sans, sans-serif" textLength="116.5" lengthAdjust="spacingAndGlyphs" fill="#828282" stroke="#fafafa" stroke-width="2.6" paint-order="stroke" stroke-linejoin="round" opacity="1">Böckinger Wiesen</text><text x="676.4" y="776.0" font-size="14" font-family="Liberation Sans, sans-serif" textLength="60.8" lengthAdjust="spacingAndGlyphs" fill="#828282" stroke="#fafafa" stroke-width="2.6" paint-order="stroke" stroke-linejoin="round" opacity="1">Kürnbach</text><text x="1097.5" y="782.7" font-size="13" font-family="Liberation Sans, sans-serif" textLength="176.2" lengthAdjust="spacingAndGlyphs" fill="#828282" stroke="#fafafa" stroke-width="2.6" paint-order="stroke" stroke-linejoin="round" opacity="1">BRACKENHEIM-STOCKHEIM</text><text x="1600.6" y="770.0" font-size="13" font-family="Liberation Sans, sans-serif" textLength="183.7" lengthAdjust="spacingAndGlyphs" fill="#828282" stroke="#fafafa" stroke-width="2.6" paint-order="stroke" stroke-linejoin="round" opacity="1">TALHEIM (SCHLOSSWIESEN)</text><text x="1329.0" y="785.0" font-size="13" font-family="Liberation Sans, sans-serif" textLength="180.0" lengthAdjust="spacingAndGlyphs" fill="#828282" stroke="#fafafa" stroke-width="2.6" paint-order="stroke" stroke-linejoin="round" opacity="1">LAUFFEN (QUELLE HAUSEN)</text><text x="1389.0" y="478.0" font-size="13" font-family="Liberation Sans, sans-serif" textLength="89.0" lengthAdjust="spacingAndGlyphs" fill="#a23bc4" stroke="#d58ad0" stroke-width="2.6" paint-order="stroke" stroke-linejoin="round" opacity="1">LEINBACHTAL</text><text x="1297.5" y="553.7" font-size="12" font-family="Liberation Sans, sans-serif" textLength="64.2" lengthAdjust="spacingAndGlyphs" fill="#a9527f">Schwaigern</text><text x="1483.7" y="545.2" font-size="12" font-family="Liberation Sans, sans-serif" textLength="57.9" lengthAdjust="spacingAndGlyphs" fill="#a9527f">Leingarten</text><text x="1740.4" y="550.4" font-size="13.4" font-family="Liberation Sans, sans-serif" textLength="60.6" lengthAdjust="spacingAndGlyphs" fill="#666" stroke="#efefef" stroke-width="1.5" paint-order="stroke">Heilbronn</text><rect x="598" y="759.5" width="1246" height="32" fill="#ffffff" fill-opacity="0.68"/><rect x="598" y="759" width="1246" height="1" fill="#c9c9c9"/><rect x="1568" y="764" width="104" height="24" fill="#e6e6e6" fill-opacity="0.75"/><rect x="1677" y="764" width="24" height="24" fill="#e6e6e6" fill-opacity="0.6"/><circle cx="1689" cy="770.4" r="1.6" fill="#222"/><circle cx="1689" cy="776" r="1.6" fill="#222"/><circle cx="1689" cy="781.5" r="1.6" fill="#222"/><path d="M1758.5,771 V780.5 H1832.5 V771" fill="none" stroke="#111" stroke-width="1" shape-rendering="crispEdges"/><rect x="598" y="190" width="1246" height="1" fill="#c4c4c4"/></svg>
<span class="t" style="left:1294.00px;top:770.52px;font-size:11.20px;color:#111;transform:scaleX(0.9816);-webkit-text-stroke:0.25px #111;will-change:transform;">ETRS89 / UTM zone 32N EPSG:25832</span>
<span class="t" style="left:1518.80px;top:770.52px;font-size:11.20px;color:#111;transform:scaleX(1.0352);-webkit-text-stroke:0.25px #111;will-change:transform;">Maßstab</span>
<span class="t" style="left:1576.00px;top:770.52px;font-size:11.20px;color:#111;transform:scaleX(1.0507);-webkit-text-stroke:0.25px #111;will-change:transform;">1 : 100.000</span>
<span class="t" style="left:1723.00px;top:770.52px;font-size:11.20px;color:#111;transform:scaleX(1.0351);-webkit-text-stroke:0.25px #111;will-change:transform;">2 km</span>
<div class="b" style="left:606px;top:720px;width:32px;height:32px;background:#fff;border-radius:3px;box-shadow:0 1px 3px rgba(0,0,0,.25);"></div>
<svg style="left:606px;top:720px" width="32" height="32" viewBox="606 720 32 32"><g fill="#555"><path d="M617.6 730.4 L619.1 733 H616.1 Z"/><circle cx="617.6" cy="736" r="1.45"/><circle cx="617.6" cy="740" r="1.45"/><rect x="620.7" y="731.4" width="6.5" height="1.5"/><rect x="620.7" y="735.25" width="6.5" height="1.5"/><rect x="620.7" y="739.2" width="6.5" height="1.5"/></g></svg>
<div class="b" style="left:756px;top:322px;width:350px;height:366px;background:#fff;box-shadow:0 2px 8px rgba(0,0,0,.32);"></div>
<span class="t" style="left:772.20px;top:329.05px;font-size:14.00px;color:#333;transform:scaleX(0.9063);-webkit-text-stroke:0.5px #333;will-change:transform;">AUSWAHL</span>
<svg style="left:1045px;top:326px" width="48" height="20" viewBox="1045 326 48 20"><g stroke="#444" stroke-width="1.3" fill="none"><path d="M1075.4 331.2 L1085 340.9 M1085 331.2 L1075.4 340.9"/><path d="M1061.8 330.4 L1057.3 334.9 M1057.3 331.2 V334.9 H1061 M1050.2 341.3 L1054.7 336.8 M1054.7 340.5 V336.8 H1051"/></g></svg>
<div class="b" style="left:772px;top:350px;width:318px;height:1px;background:#cfcfcf;"></div>
<div class="b" style="left:773px;top:365px;width:18px;height:16px;border:1px solid #444;background:#fff;"></div>
<svg style="left:773px;top:365px" width="18" height="16" viewBox="0 0 18 16"><path fill="#2a2a2a" d="M3.1 5.6 L4.3 4 L6 3.4 L7 2.6 L8 3.4 L9.6 4 L10.7 3.2 L11.8 2.7 L13.4 3 L15 5 L14.5 7.6 L13.7 10.6 L11.2 12 L9.8 12.6 L10 10.9 L8 10.9 L4.8 10.7 L3.8 10.2 L4 9.2 L5.4 8.6 L4 7.6 L3.4 6.6 Z"/><path d="M11.5 2.9 L11.3 5.5 L10.6 8 L9.9 10.4 L9.5 12.6" stroke="#fff" stroke-width="0.65" fill="none"/><path d="M3.6 9 L8.6 8.85 L10.3 9.6" stroke="#fff" stroke-width="0.7" fill="none"/></svg>
<span class="t" style="left:794.40px;top:364.95px;font-size:14.00px;color:#333;transform:scaleX(0.9712);-webkit-text-stroke:0.5px #333;will-change:transform;">Wasserschutzgebiet</span>
<span class="t" style="left:773.30px;top:386.75px;font-size:14.00px;color:#444;transform:scaleX(0.9469);will-change:transform;">1 Objekt ausgewählt</span>
<div class="b" style="left:772px;top:415px;width:24px;height:24px;background:#f4f4f4;"></div>
<div class="b" style="left:800px;top:415px;width:24px;height:24px;background:#f4f4f4;"></div>
<div class="b" style="left:828px;top:415px;width:24px;height:24px;background:#f4f4f4;"></div>
<svg style="left:772px;top:415px" width="80" height="24" viewBox="772 415 80 24"><g stroke="#222" stroke-width="1.8" fill="none"><path d="M777.3 428 V433.4 H790.7 V428"/><path d="M783 430.4 V424.6 Q783 422.6 785 422.6 H790.2 M787.2 419.4 L790.5 422.6 L787.2 425.8"/><path d="M805.2 424 V420.4 H808.8 M815.2 420.4 H818.8 V424 M818.8 430 V433.6 H815.2 M808.8 433.6 H805.2 V430"/><circle cx="812" cy="427" r="1.3" fill="#222" stroke="none"/><path d="M833.2 424 V420.4 H836.8 M843.2 420.4 H846.8 V424 M846.8 430 V433.6 H843.2 M836.8 433.6 H833.2 V430 M836 427 H844 M840 423 V431"/></g></svg>
<div class="b" style="left:772px;top:451px;width:318px;height:1px;background:#cfcfcf;"></div>
<span class="t" style="left:772.20px;top:466.05px;font-size:14.00px;color:#333;transform:scaleX(0.9738);-webkit-text-stroke:0.5px #333;will-change:transform;">Wasserschutzgebiet -</span>
<div class="b" style="left:772px;top:494px;width:318px;height:24px;background:#f4f4f4;"></div>
<span class="t" style="left:780.30px;top:498.75px;font-size:14.00px;color:#333;transform:scaleX(0.9470);-webkit-text-stroke:0.5px #333;will-change:transform;">Name</span>
<span class="t" style="left:930.30px;top:498.75px;font-size:14.00px;color:#444;transform:scaleX(0.8844);will-change:transform;">LEINBACHTAL</span>
<span class="t" style="left:780.30px;top:522.75px;font-size:14.00px;color:#333;transform:scaleX(0.9445);-webkit-text-stroke:0.5px #333;will-change:transform;">Daten Fuehrende Stelle</span>
<span class="t" style="left:930.30px;top:522.75px;font-size:14.00px;color:#444;transform:scaleX(0.9618);will-change:transform;">Landratsamt Heilbronn</span>
<div class="b" style="left:772px;top:542px;width:318px;height:24px;background:#f4f4f4;"></div>
<span class="t" style="left:780.30px;top:546.75px;font-size:14.00px;color:#333;transform:scaleX(0.9574);-webkit-text-stroke:0.5px #333;will-change:transform;">Wsg Nr</span>
<span class="t" style="left:930.30px;top:546.75px;font-size:14.00px;color:#444;transform:scaleX(1.0109);will-change:transform;">125133</span>
<span class="t" style="left:780.30px;top:570.75px;font-size:14.00px;color:#333;transform:scaleX(0.9443);-webkit-text-stroke:0.5px #333;will-change:transform;">Wsg Nr Bezeichnung</span>
<span class="t" style="left:930.30px;top:570.75px;font-size:14.00px;color:#444;transform:scaleX(0.9335);will-change:transform;">WSG_NR_AMT</span>
<div class="b" style="left:772px;top:590px;width:318px;height:24px;background:#f4f4f4;"></div>
<span class="t" style="left:780.30px;top:594.75px;font-size:14.00px;color:#333;transform:scaleX(0.9594);-webkit-text-stroke:0.5px #333;will-change:transform;">Wsg Status</span>
<span class="t" style="left:930.30px;top:594.75px;font-size:14.00px;color:#444;transform:scaleX(0.9883);will-change:transform;">festgesetzt</span>
<span class="t" style="left:780.30px;top:618.75px;font-size:14.00px;color:#333;transform:scaleX(0.9470);-webkit-text-stroke:0.5px #333;will-change:transform;">Created</span>
<span class="t" style="left:930.30px;top:618.75px;font-size:14.00px;color:#444;transform:scaleX(0.9790);will-change:transform;">22.08.2024</span>
<div class="b" style="left:772px;top:650px;width:145px;height:24px;background:#f4f4f4;"></div>
<svg style="left:781px;top:653px" width="18" height="18" viewBox="781 653 18 18"><path d="M783.3 660.2 L790 654.7 L796.7 660.2 V668 H783.3 Z" stroke="#222" stroke-width="1.7" fill="none" stroke-linejoin="round"/></svg>
<span class="t" style="left:802.40px;top:654.95px;font-size:14.00px;color:#333;transform:scaleX(0.9805);-webkit-text-stroke:0.5px #333;will-change:transform;">Adresse ermitteln</span>
</body></html>
